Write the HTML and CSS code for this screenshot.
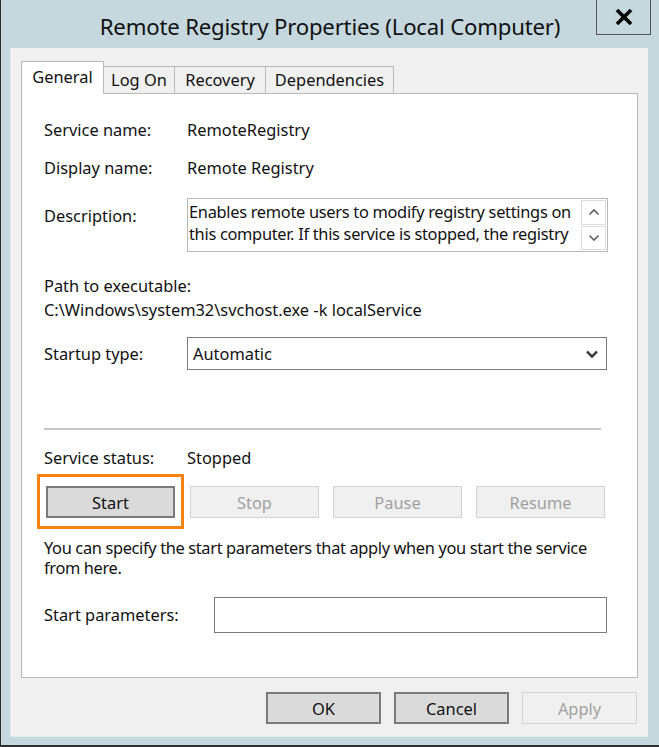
FILE: index.html
```html
<!DOCTYPE html>
<html lang="en">
<head>
    <meta charset="UTF-8">
    <meta name="viewport" content="width=device-width, initial-scale=1.0">
    <title>Remote Registry Properties (Local Computer)</title>
    <link rel="stylesheet" href="styles.css">
</head>
<body>
    <div class="window">
        <div class="titlebar">
            <span></span>
            <h1 class="title">Remote Registry Properties (Local Computer)</h1>
            <button class="close" aria-label="Close">
                <svg width="18" height="16" viewBox="0 0 18 16">
                    <path d="M2 1 L16 15 M16 1 L2 15" stroke="#000" stroke-width="3.6"/>
                </svg>
            </button>
        </div>

        <div class="client">
            <div class="tabs">
                <div class="tab tab-active tab-general">General</div>
                <div class="tab tab-logon">Log On</div>
                <div class="tab tab-recovery">Recovery</div>
                <div class="tab tab-deps">Dependencies</div>
            </div>

            <div class="panel">
                <div class="row row-name">
                    <span class="label">Service name:</span>
                    <span>RemoteRegistry</span>
                </div>
                <div class="row row-display">
                    <span class="label">Display name:</span>
                    <span>Remote Registry</span>
                </div>
                <div class="row row-desc">
                    <span class="label label-desc">Description:</span>
                    <div class="descbox">
                        <p class="desc-text">Enables remote users to modify registry settings on this computer. If this service is stopped, the registry</p>
                        <div class="scroll">
                            <div class="scroll-btn">
                                <svg width="12" height="8" viewBox="0 0 12 8"><path d="M1.5 6.5 L6 2 L10.5 6.5" fill="none" stroke="#606060" stroke-width="1.6"/></svg>
                            </div>
                            <div class="scroll-btn">
                                <svg width="12" height="8" viewBox="0 0 12 8"><path d="M1.5 1.5 L6 6 L10.5 1.5" fill="none" stroke="#606060" stroke-width="1.6"/></svg>
                            </div>
                        </div>
                    </div>
                </div>

                <div class="path">
                    <div>Path to executable:</div>
                    <div>C:\Windows\system32\svchost.exe -k localService</div>
                </div>

                <div class="row row-startup">
                    <span class="label">Startup type:</span>
                    <div class="select">
                        <span>Automatic</span>
                        <svg width="14" height="10" viewBox="0 0 14 10"><path d="M2 2.5 L7 7.5 L12 2.5" fill="none" stroke="#333" stroke-width="2.4"/></svg>
                    </div>
                </div>

                <hr class="sep">

                <div class="row row-status">
                    <span class="label">Service status:</span>
                    <span>Stopped</span>
                </div>

                <div class="actions">
                    <div class="highlight">
                        <button class="btn btn-strong">Start</button>
                    </div>
                    <button class="btn" disabled>Stop</button>
                    <button class="btn" disabled>Pause</button>
                    <button class="btn" disabled>Resume</button>
                </div>

                <p class="hint">You can specify the start parameters that apply when you start the service from here.</p>

                <div class="row row-params">
                    <span class="label label-params">Start parameters:</span>
                    <div class="textbox"></div>
                </div>
            </div>

            <div class="footer">
                <button class="btn btn-strong btn-foot">OK</button>
                <button class="btn btn-strong btn-foot">Cancel</button>
                <button class="btn btn-foot" disabled>Apply</button>
            </div>
        </div>
    </div>
</body>
</html>
```

FILE: styles.css
```css
* { box-sizing: border-box; }
body {
    margin: 0;
    font-family: "Noto Sans", "Open Sans", sans-serif;
    font-size: 16.4px;
    color: #111;
}
.window {
    width: 659px;
    height: 747px;
    background-color: #c5d8de;
    border-left: 1px solid #2e2e2e;
    border-bottom: 2px solid #2e2e2e;
}
.titlebar {
    height: 48px;
    display: grid;
    grid-template-columns: 1fr auto 1fr;
}
.title {
    margin: 0;
    font-size: 22.2px;
    font-weight: normal;
    line-height: 54px;
    color: #111;
    letter-spacing: -0.2px;
}
.close {
    justify-self: end;
    width: 55px;
    height: 35px;
    margin-right: 8px;
    background-color: #c5d8de;
    border: 1px solid #555;
    border-top: none;
    padding: 0;
    display: flex;
    align-items: center;
    justify-content: center;
}
.client {
    height: 689px;
    margin: 0 11px 0 9px;
    background-color: #f0f0f0;
    padding: 13px 10px 0 10px;
    border-left: 1px solid #e4ecee;
    border-bottom: 1px solid #e4ecee;
}
.tabs {
    display: flex;
    align-items: flex-end;
    height: 32px;
}
.tab {
    height: 27px;
    line-height: 25px;
    text-align: center;
    border: 1px solid #b9b9b9;
    border-bottom: none;
    border-left: none;
    background-color: #f0f0f0;
}
.tab-active {
    height: 33px;
    margin-bottom: -1px;
    line-height: 30px;
    background-color: #fff;
    border-left: 1px solid #b9b9b9;
}
.tab-general { width: 83px; }
.tab-logon { width: 71px; }
.tab-recovery { width: 91px; }
.tab-deps { width: 128px; }
.panel {
    height: 585px;
    background-color: #fff;
    border: 1px solid #b9b9b9;
    padding: 26px 30px 0 22px;
}
.row {
    display: grid;
    grid-template-columns: 143px 1fr;
    align-items: center;
    line-height: 20px;
}
.row-display { margin-top: 18px; }
.row-desc {
    margin-top: 20px;
    align-items: start;
}
.label-desc { padding-top: 8px; }
.descbox {
    height: 54px;
    border: 1px solid #b9b9b9;
    display: flex;
    justify-content: space-between;
    padding: 1px 0 1px 1px;
}
.desc-text {
    margin: 1px 0 0 0;
    line-height: 22px;
    width: 392px;
    letter-spacing: -0.3px;
}
.scroll {
    display: flex;
    flex-direction: column;
    gap: 1px;
    padding-right: 1px;
}
.scroll-btn {
    width: 25px;
    height: 25px;
    border: 1px solid #dcdcdc;
    display: flex;
    align-items: center;
    justify-content: center;
}
.path {
    margin-top: 22px;
    line-height: 24px;
}
.row-startup { margin-top: 15px; }
.select {
    height: 33px;
    border: 1px solid #7a7a7a;
    display: flex;
    align-items: center;
    justify-content: space-between;
    padding: 0 7px 0 5px;
}
.sep {
    margin: 58px 6px 0 0;
    border: none;
    border-top: 2px solid #c8c8c8;
}
.row-status { margin-top: 18px; }
.actions {
    display: flex;
    gap: 14px;
    margin: 18px 0 0 2px;
}
.highlight {
    margin: -12px -8px -11px -9px;
    padding: 9px 6px 8px 6px;
    border: 3px solid #f7820e;
}
.btn {
    width: 129px;
    height: 32px;
    font-family: inherit;
    font-size: 16.4px;
    color: #111;
    background-color: #e1e1e1;
    border: 1px solid #adadad;
    padding: 0;
}
.btn:disabled {
    background-color: #f0f0f0;
    border-color: #d2d2d2;
    color: #a0a0a0;
}
.btn-strong {
    background-color: #dadada;
    border: 2px solid #7a7a7a;
}
.hint {
    margin: 20px 0 0 0;
    line-height: 20px;
    letter-spacing: -0.35px;
}
.row-params {
    margin-top: 19px;
    grid-template-columns: 170px 1fr;
}
.textbox {
    height: 36px;
    border: 1px solid #7a7a7a;
}
.footer {
    display: flex;
    justify-content: flex-end;
    gap: 13px;
    margin-top: 14px;
    padding-right: 1px;
}
.btn-foot { width: 115px; }
```
